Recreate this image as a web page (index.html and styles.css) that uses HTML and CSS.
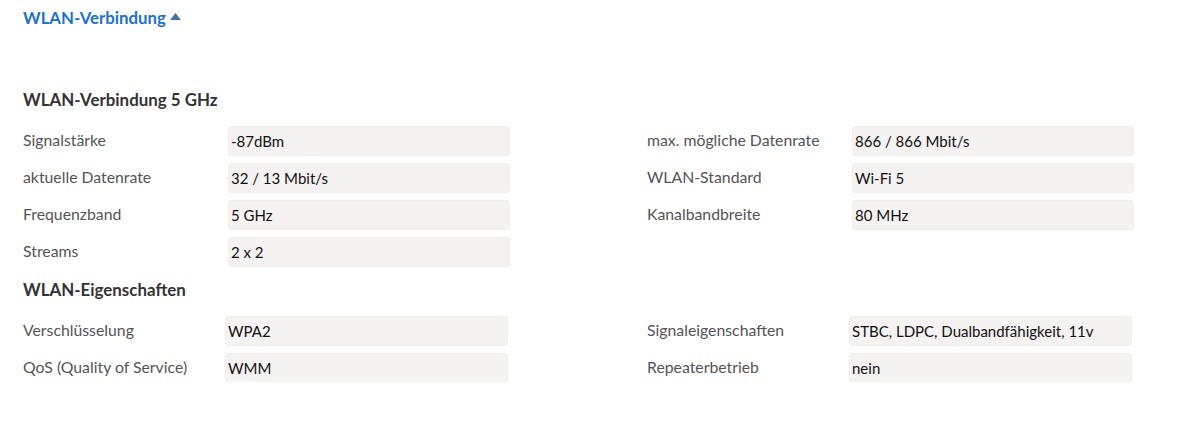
FILE: index.html
```html
<!DOCTYPE html>
<html lang="de">
<head>
<meta charset="utf-8">
<title>WLAN-Verbindung</title>
<link rel="stylesheet" href="styles.css">
</head>
<body>
<div class="page">
  <div class="toggle">
    <span class="toggle-text">WLAN-Verbindung</span>
    <svg class="caret" width="11" height="7" viewBox="0 0 11 7"><polygon points="0,7 5.5,0 11,7" fill="#4a6ea8"/></svg>
  </div>

  <h3 class="section-title first">WLAN-Verbindung 5 GHz</h3>
  <div class="grid">
    <div class="label">Signalstärke</div><div class="value">-87dBm</div>
    <div class="label right">max. mögliche Datenrate</div><div class="value">866 / 866 Mbit/s</div>
    <div class="label">aktuelle Datenrate</div><div class="value">32 / 13 Mbit/s</div>
    <div class="label right">WLAN-Standard</div><div class="value">Wi-Fi 5</div>
    <div class="label">Frequenzband</div><div class="value">5 GHz</div>
    <div class="label right">Kanalbandbreite</div><div class="value">80 MHz</div>
    <div class="label">Streams</div><div class="value">2 x 2</div>
  </div>

  <h3 class="section-title second">WLAN-Eigenschaften</h3>
  <div class="grid grid-alt">
    <div class="label">Verschlüsselung</div><div class="value">WPA2</div>
    <div class="label right">Signaleigenschaften</div><div class="value">STBC, LDPC, Dualbandfähigkeit, 11v</div>
    <div class="label">QoS (Quality of Service)</div><div class="value">WMM</div>
    <div class="label right">Repeaterbetrieb</div><div class="value">nein</div>
  </div>
</div>
</body>
</html>
```
FILE: styles.css
```css
html, body {
  margin: 0;
  padding: 0;
  background: #ffffff;
}
body {
  font-family: Lato, "Open Sans", "Liberation Sans", sans-serif;
  font-size: 15px;
  color: #555555;
}
.page {
  padding: 0 0 0 23px;
}
.toggle {
  display: flex;
  align-items: center;
  gap: 4px;
  height: 34px;
  color: #1e70c8;
  font-weight: 700;
  font-size: 16.8px;
}
.caret {
  margin-top: -2px;
}
.section-title {
  margin: 0;
  font-size: 16.9px;
  font-weight: 700;
  color: #333333;
  line-height: 20px;
}
.section-title.first {
  margin-top: 56px;
  margin-bottom: 17px;
}
.section-title.second {
  margin-top: 14px;
  margin-bottom: 17px;
}
.grid {
  display: grid;
  grid-template-columns: 206px 280px 138px 206px 280px;
  grid-auto-rows: 28px;
  row-gap: 9px;
}
.grid .label {
  grid-column: 1;
  display: flex;
  align-items: center;
  padding-bottom: 3px;
  font-size: 15.8px;
}
.grid .label.right {
  grid-column: 4;
}
.grid .value {
  display: flex;
  align-items: center;
  padding-left: 2px;
  background: #f4f3f1;
  border-radius: 3px;
  box-shadow: 0 0 0 1px #f0efec;
  color: #111111;
}
.grid-alt {
  grid-template-columns: 203px 281px 140px 203px 281px;
}
```
